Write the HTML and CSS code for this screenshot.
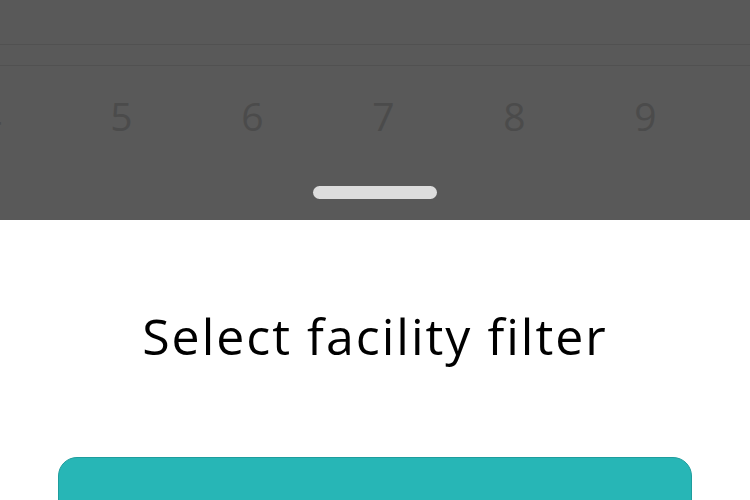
FILE: index.html
```html
<!DOCTYPE html>
<html lang="en">
<head>
    <meta charset="UTF-8">
    <meta name="viewport" content="width=device-width, initial-scale=1.0">
    <title>Select facility filter</title>
    <link rel="stylesheet" href="styles.css">
</head>
<body>
    <div class="picker">
        <div class="band"></div>
        <div class="digits">
            <span class="digit">4</span>
            <span class="digit">5</span>
            <span class="digit">6</span>
            <span class="digit">7</span>
            <span class="digit">8</span>
            <span class="digit">9</span>
        </div>
        <div class="handle"></div>
    </div>

    <div class="sheet">
        <h1 class="title">Select facility filter</h1>
        <button class="apply" type="button"></button>
    </div>
</body>
</html>
```

FILE: styles.css
```css
body {
    margin: 0;
    padding: 0;
    background-color: #fff;
    font-family: "Open Sans", "Noto Sans", sans-serif;
    overflow: hidden;
}
.picker {
    height: 220px;
    background-color: #595959;
    padding-top: 44px;
    box-sizing: border-box;
    overflow: hidden;
    display: flex;
    flex-direction: column;
}
.band {
    height: 20px;
    border-top: 1px solid #515151;
    border-bottom: 1px solid #515151;
}
.digits {
    display: flex;
    margin-top: 30px;
    margin-left: -75px;
}
.digit {
    flex: 0 0 131px;
    text-align: center;
    font-size: 39px;
    line-height: 40px;
    color: #4b4b4b;
}
.handle {
    align-self: center;
    width: 124px;
    height: 13px;
    margin-top: 50px;
    border-radius: 7px;
    background-color: #dddddd;
}
.sheet {
    display: flex;
    flex-direction: column;
    align-items: center;
}
.title {
    margin: 86px 0 0;
    font-size: 50px;
    font-weight: 500;
    line-height: 60px;
    letter-spacing: 2px;
    color: #000;
}
.apply {
    width: 634px;
    height: 70px;
    margin-top: 91px;
    background-color: #27b6b6;
    border: 1px solid #1f9d9d;
    border-radius: 19px;
}
```
